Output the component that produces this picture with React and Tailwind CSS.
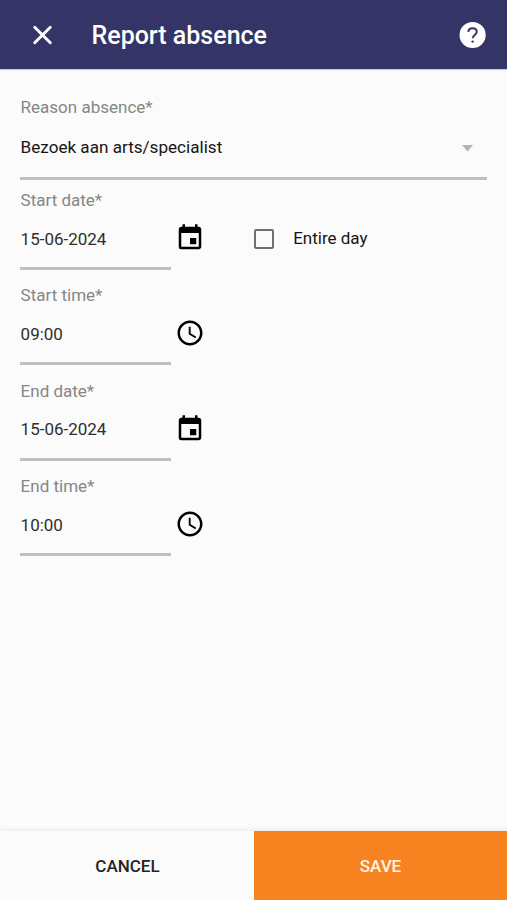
import React from 'react';
import { MdAccessTime, MdEvent } from 'react-icons/md';

const CloseIcon = () => (
    <svg width="21" height="20" viewBox="0 0 21 20" fill="none" stroke="currentColor" strokeWidth="2.9" strokeLinecap="round">
        <path d="M2.7 2.2 18.3 17.8M18.3 2.2 2.7 17.8" />
    </svg>
);

const HelpIcon = () => (
    <svg width="28" height="28" viewBox="0 0 28 28" fill="none">
        <circle cx="13.6" cy="14" r="13.1" fill="white" />
        <path
            d="M9.4 10.9c0-2.2 1.8-3.7 4.2-3.7s4.2 1.5 4.2 3.6c0 3-4.2 3.3-4.2 6.5"
            stroke="#353467"
            strokeWidth="1.9"
        />
        <circle cx="13.6" cy="20.6" r="1.2" fill="#353467" />
    </svg>
);

const Field = ({ label, value, icon: Icon, children }) => {
    return (
        <div className="h-[95.3px]">
            <label className="block pl-[0.6px] text-[17px] leading-5 text-[#868686]">{label}</label>
            <div className="flex">
                <div className="flex h-[60px] w-[151px] items-center border-b-3 border-[#bfbfbf] pl-[0.6px] pt-[2.2px] text-[17px] text-[#2e2e2e]">
                    {value}
                </div>
                <button className="ml-[4.4px] mt-[13px] h-[30px] text-black">
                    <Icon size={30} />
                </button>
                {children}
            </div>
        </div>
    );
};

const App = () => {
    return (
        <div className="flex h-[900px] w-[507px] flex-col bg-[#fbfbfb] font-['Roboto',sans-serif]">
            <header className="flex h-[69px] items-center bg-[#353467] pl-8 pr-5 pt-[1px] text-white shadow-[0_1px_1px_#cfcfdb]">
                <CloseIcon />
                <h1 className="ml-[38.5px] flex-1 pt-[1px] text-[25px] font-medium leading-8">Report absence</h1>
                <HelpIcon />
            </header>

            <main className="flex-1 px-5 pt-[28px]">
                <div className="h-[93px]">
                    <label className="block pl-[0.6px] text-[17px] leading-5 text-[#868686]">Reason absence*</label>
                    <div className="flex h-[62.6px] items-center justify-between border-b-3 border-[#bfbfbf] pl-[0.6px] pr-[14px] pt-[2.6px] text-[17.1px] text-[#161616]">
                        <span>Bezoek aan arts/specialist</span>
                        <svg width="11" height="7" viewBox="0 0 11 7" fill="#b4b4b4">
                            <path d="M0 0h11L5.5 6.5z" />
                        </svg>
                    </div>
                </div>

                <Field label="Start date*" value="15-06-2024" icon={MdEvent}>
                    <label className="ml-[48.6px] flex h-[57px] items-center text-[17px] text-[#161616]">
                        <span className="mr-[19.2px] size-5 rounded-[2px] border-[2.5px] border-[#707070]" />
                        Entire day
                    </label>
                </Field>
                <Field label="Start time*" value="09:00" icon={MdAccessTime} />
                <Field label="End date*" value="15-06-2024" icon={MdEvent} />
                <Field label="End time*" value="10:00" icon={MdAccessTime} />
            </main>

            <footer className="flex h-[69px] text-[17px] font-medium shadow-[0_-2px_4px_rgba(0,0,0,0.06)]">
                <button className="w-[254px] bg-[#fbfbfb] pl-[1px] pt-[2px] text-[#242424]">CANCEL</button>
                <button className="flex-1 bg-[#f6831f] pt-[2px] text-[#fff3e4]">SAVE</button>
            </footer>
        </div>
    );
};

export default App;
